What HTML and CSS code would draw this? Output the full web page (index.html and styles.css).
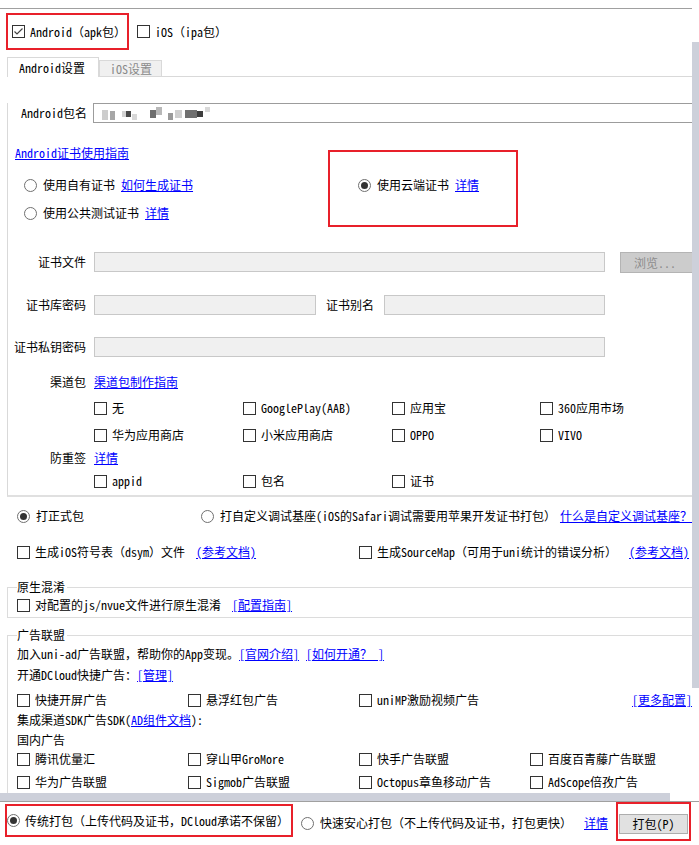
FILE: index.html
```html
<!DOCTYPE html>
<html lang="zh-CN">
<head>
  <meta charset="UTF-8">
  <meta name="viewport" content="width=device-width, initial-scale=1.0">
  <title>云打包</title>
  <link rel="stylesheet" href="styles.css">
</head>
<body>
  <div class="window">
    <div class="viewport">
      <div class="platforms">
        <div class="plat-main">
          <span class="cb"><svg width="11" height="11" viewBox="0 0 11 11"><path d="M1.5 5.5 L4 8 L9.5 2.5" fill="none" stroke="#444" stroke-width="1.2"/></svg></span>Android（apk包）
        </div>
        <div class="plat"><span class="cb"></span>iOS（ipa包）</div>
      </div>

      <div class="tabs">
        <div class="tab-active">Android设置</div>
        <div class="tab">iOS设置</div>
        <div class="tab-fill"></div>
      </div>

      <div class="panel">
        <div class="pkg-row">
          <span class="pkg-label">Android包名</span>
          <div class="pkg-input"><div class="mosaic"></div></div>
        </div>

        <div class="cert-row">
          <div class="cert-left">
            <a href="#" class="guide-link">Android证书使用指南</a>
            <div class="radio-line first"><span class="rd"></span>使用自有证书&nbsp;<a href="#">如何生成证书</a></div>
            <div class="radio-line second"><span class="rd"></span>使用公共测试证书&nbsp;<a href="#">详情</a></div>
          </div>
          <div class="cloud-box">
            <div class="radio-line"><span class="rd on"></span>使用云端证书&nbsp;<a href="#">详情</a></div>
          </div>
        </div>

        <div class="fields">
          <div class="field-row row1">
            <span class="field-label">证书文件</span>
            <div class="input-gray w511"></div>
            <div class="browse-btn">浏览...</div>
          </div>
          <div class="field-row row2">
            <span class="field-label">证书库密码</span>
            <div class="input-gray w222"></div>
            <span class="alias-label">证书别名</span>
            <div class="input-gray w221"></div>
          </div>
          <div class="field-row row3">
            <span class="field-label">证书私钥密码</span>
            <div class="input-gray w511"></div>
          </div>

          <div class="opt-row channel">
            <span class="field-label">渠道包</span>
            <a href="#" class="opt-link">渠道包制作指南</a>
          </div>
          <div class="cb-grid">
            <div class="cb-item"><span class="cb"></span>无</div>
            <div class="cb-item"><span class="cb"></span>GooglePlay(AAB)</div>
            <div class="cb-item"><span class="cb"></span>应用宝</div>
            <div class="cb-item"><span class="cb"></span>360应用市场</div>
            <div class="cb-item"><span class="cb"></span>华为应用商店</div>
            <div class="cb-item"><span class="cb"></span>小米应用商店</div>
            <div class="cb-item"><span class="cb"></span>OPPO</div>
            <div class="cb-item"><span class="cb"></span>VIVO</div>
          </div>
          <div class="opt-row resign">
            <span class="field-label">防重签</span>
            <a href="#" class="opt-link">详情</a>
          </div>
          <div class="cb-grid small">
            <div class="cb-item"><span class="cb"></span>appid</div>
            <div class="cb-item"><span class="cb"></span>包名</div>
            <div class="cb-item"><span class="cb"></span>证书</div>
          </div>
        </div>
      </div>

      <div class="mode-row">
        <div class="mode-item"><span class="rd on"></span>打正式包</div>
        <div class="mode-item2"><span class="rd"></span>打自定义调试基座(iOS的Safari调试需要用苹果开发证书打包）<a href="#" class="mode-link">什么是自定义调试基座？</a></div>
      </div>

      <div class="sym-row">
        <div class="sym-item"><span class="cb"></span>生成iOS符号表（dsym）文件<a href="#" class="ref-link">(参考文档)</a></div>
        <div class="sym-item2"><span class="cb"></span>生成SourceMap（可用于uni统计的错误分析）<a href="#" class="ref-link2">(参考文档)</a></div>
      </div>

      <fieldset class="group obf">
        <legend>原生混淆</legend>
        <div class="obf-row"><span class="cb"></span>对配置的js/nvue文件进行原生混淆<a href="#" class="ref-link">[配置指南]</a></div>
      </fieldset>

      <fieldset class="group ads">
        <legend>广告联盟</legend>
        <div class="ad-line l1">加入uni-ad广告联盟，帮助你的App变现。<a href="#">[官网介绍]</a><a href="#" class="gap-link">[如何开通？ ]</a></div>
        <div class="ad-line l2">开通DCloud快捷广告：<a href="#">[管理]</a></div>
        <div class="ad-grid first">
          <div class="cb-item"><span class="cb"></span>快捷开屏广告</div>
          <div class="cb-item"><span class="cb"></span>悬浮红包广告</div>
          <div class="cb-item"><span class="cb"></span>uniMP激励视频广告</div>
          <a href="#" class="more-link">[更多配置]</a>
        </div>
        <div class="ad-line l3">集成渠道SDK广告SDK(<a href="#">AD组件文档</a>):</div>
        <div class="ad-line l4">国内广告</div>
        <div class="ad-grid r1">
          <div class="cb-item"><span class="cb"></span>腾讯优量汇</div>
          <div class="cb-item"><span class="cb"></span>穿山甲GroMore</div>
          <div class="cb-item"><span class="cb"></span>快手广告联盟</div>
          <div class="cb-item"><span class="cb"></span>百度百青藤广告联盟</div>
        </div>
        <div class="ad-grid r2">
          <div class="cb-item"><span class="cb"></span>华为广告联盟</div>
          <div class="cb-item"><span class="cb"></span>Sigmob广告联盟</div>
          <div class="cb-item"><span class="cb"></span>Octopus章鱼移动广告</div>
          <div class="cb-item"><span class="cb"></span>AdScope倍孜广告</div>
        </div>
      </fieldset>
    </div>
    <div class="vtrack"><div class="vthumb"></div></div>
  </div>
  <div class="hbar"><div class="hthumb"></div></div>

  <div class="footer">
    <div class="pack-box"><span class="rd on"></span>传统打包（上传代码及证书，DCloud承诺不保留）</div>
    <div class="fast-item"><span class="rd"></span>快速安心打包（不上传代码及证书，打包更快）<a href="#" class="fast-link">详情</a></div>
    <div class="btn-box"><div class="pack-btn">打包(P)</div></div>
  </div>
</body>
</html>
```

FILE: styles.css
```css
body {
  margin: 0;
  font-family: "Noto Sans Mono CJK SC", "Noto Sans CJK SC", sans-serif;
  font-size: 12px;
  line-height: 16px;
  color: #000;
  background: #fff;
}
a {
  color: #0000ff;
  text-decoration: underline;
}
.window {
  display: flex;
  padding-top: 8px;
}
.viewport {
  width: 692px;
  height: 784px;
  border-top: 1px solid #a0a0a0;
  overflow: hidden;
  white-space: nowrap;
}
.vtrack {
  width: 7px;
  padding-top: 34px;
}
.vthumb {
  height: 646px;
  background: #cdd0da;
}
.hbar {
  height: 8px;
}
.hthumb {
  width: 670px;
  height: 8px;
  background: #cdd0da;
}

/* controls */
.cb {
  box-sizing: border-box;
  width: 13px;
  height: 13px;
  border: 1px solid #333;
  background: #fff;
  margin-right: 5px;
  flex: none;
  display: inline-flex;
  align-items: center;
  justify-content: center;
}
.rd {
  box-sizing: border-box;
  width: 13px;
  height: 13px;
  border: 1px solid #707070;
  border-radius: 50%;
  background: #fff;
  margin-right: 6px;
  flex: none;
  display: inline-flex;
  align-items: center;
  justify-content: center;
}
.rd.on::after {
  content: "";
  width: 7px;
  height: 7px;
  border-radius: 50%;
  background: #333;
}

/* platforms */
.platforms {
  display: flex;
  align-items: center;
  margin-top: 4px;
  height: 37px;
}
.plat-main {
  box-sizing: border-box;
  width: 123px;
  height: 37px;
  margin-left: 6px;
  border: 2px solid #e8202a;
  padding-left: 4px;
  display: flex;
  align-items: center;
}
.plat {
  margin-left: 8px;
  display: flex;
  align-items: center;
}

/* tabs */
.tabs {
  display: flex;
  align-items: flex-end;
  margin-top: 7px;
  margin-left: 7px;
  height: 20px;
}
.tab-active {
  box-sizing: border-box;
  width: 92px;
  height: 20px;
  border: 1px solid #d9d9d9;
  border-bottom: none;
  padding-left: 11px;
  line-height: 19px;
  background: #fff;
}
.tab {
  box-sizing: border-box;
  width: 63px;
  height: 17px;
  border: 1px solid #d9d9d9;
  background: #f0f0f0;
  color: #8a8a8a;
  padding-left: 10px;
  line-height: 15px;
}
.tab-fill {
  flex: 1;
  border-bottom: 1px solid #d9d9d9;
}

/* panel */
.panel {
  margin-left: 7px;
  border-left: 1px solid #d9d9d9;
  border-bottom: 2px solid #e0e0e0;
  padding: 0 0 6px 7px;
}
.pkg-row {
  display: flex;
  align-items: center;
  height: 20px;
  margin-top: 26px;
}
.pkg-label {
  margin-left: 6px;
  width: 66px;
}
.pkg-input {
  box-sizing: border-box;
  flex: none;
  width: 640px;
  height: 20px;
  margin-left: 6px;
  border: 1px solid #9c9c9c;
  background: #fff;
}
.mosaic {
  width: 112px;
  height: 14px;
  margin: 2px 0 0 6px;
  background:
    linear-gradient(#cdcdcd, #cdcdcd) 2px 4px / 6px 10px no-repeat,
    linear-gradient(#a6a6a6, #a6a6a6) 10px 5px / 5px 9px no-repeat,
    linear-gradient(#d2d2d2, #d2d2d2) 22px 5px / 4px 6px no-repeat,
    linear-gradient(#4a4a4a, #4a4a4a) 26px 5px / 5px 6px no-repeat,
    linear-gradient(#d8d8d8, #d8d8d8) 32px 8px / 5px 6px no-repeat,
    linear-gradient(#6e6e6e, #6e6e6e) 50px 4px / 6px 8px no-repeat,
    linear-gradient(#b8b8b8, #b8b8b8) 56px 1px / 6px 8px no-repeat,
    linear-gradient(#9a9a9a, #9a9a9a) 68px 7px / 5px 7px no-repeat,
    linear-gradient(#cfcfcf, #cfcfcf) 75px 4px / 7px 8px no-repeat,
    linear-gradient(#707070, #707070) 85px 4px / 12px 8px no-repeat,
    linear-gradient(#3e3e3e, #3e3e3e) 97px 5px / 6px 6px no-repeat,
    linear-gradient(#d9d9d9, #d9d9d9) 105px 1px / 5px 5px no-repeat;
}

/* certificate */
.cert-row {
  display: flex;
  align-items: flex-start;
  margin-top: 22px;
}
.cert-left {
  width: 313px;
}
.guide-link {
  display: block;
  width: max-content;
}
.radio-line {
  display: flex;
  align-items: center;
  height: 16px;
}
.cert-left .radio-line {
  margin-left: 9px;
}
.radio-line.first {
  margin-top: 16px;
}
.radio-line.second {
  margin-top: 12px;
}
.cloud-box {
  box-sizing: border-box;
  width: 190px;
  height: 77px;
  margin-top: 5px;
  border: 2px solid #e8202a;
  padding: 25px 0 0 28px;
}

/* fields */
.fields {
  margin-left: -7px;
}
.field-row {
  display: flex;
  align-items: center;
  height: 20px;
}
.field-row.row1 {
  margin-top: 25px;
}
.field-row.row2 {
  margin-top: 23px;
}
.field-row.row3 {
  margin-top: 22px;
}
.field-label {
  width: 78px;
  flex: none;
  text-align: right;
  margin-right: 8px;
}
.input-gray {
  box-sizing: border-box;
  flex: none;
  height: 20px;
  border: 1px solid #c8c8c8;
  background: #f0f0f0;
}
.w511 { width: 511px; }
.w222 { width: 222px; }
.w221 { width: 221px; }
.alias-label {
  margin: 0 10px;
}
.browse-btn {
  box-sizing: border-box;
  flex: none;
  align-self: flex-start;
  width: 80px;
  height: 21px;
  margin-left: 15px;
  border: 1px solid #b4b4b4;
  background: #cccccc;
  color: #8c8c8c;
  padding-left: 13px;
  line-height: 19px;
}
.opt-row {
  display: flex;
  height: 16px;
}
.opt-row.channel {
  margin-top: 17px;
}
.opt-row.resign {
  margin-top: 7px;
}
.cb-grid {
  display: grid;
  grid-template-columns: 149px 149px 148px 150px;
  row-gap: 11px;
  margin: 10px 0 0 86px;
}
.cb-grid.small {
  margin-top: 7px;
}
.cb-item {
  display: flex;
  align-items: center;
  height: 16px;
}

/* build mode */
.mode-row {
  display: flex;
  height: 16px;
  margin-top: 11px;
  padding-left: 17px;
}
.mode-item {
  display: flex;
  align-items: center;
  width: 186px;
}
.mode-item2 {
  display: flex;
  align-items: center;
}
.mode-link {
  margin-left: 4px;
}
.sym-row {
  display: flex;
  height: 16px;
  margin-top: 20px;
  padding-left: 17px;
}
.sym-item {
  display: flex;
  align-items: center;
  width: 342px;
}
.sym-item2 {
  display: flex;
  align-items: center;
}
.ref-link {
  margin-left: 11px;
}
.ref-link2 {
  margin-left: 12px;
}

/* group boxes */
.group {
  margin: 0 0 0 7px;
  min-width: 0;
  border: 1px solid #dcdcdc;
  border-right: none;
  padding: 0 0 4px 9px;
}
.group legend {
  padding: 0 2px 0 0;
  line-height: 16px;
}
.group.obf {
  margin-top: 19px;
}
.group.ads {
  margin-top: 9px;
}
.obf-row {
  display: flex;
  align-items: center;
  height: 16px;
  margin-top: 2px;
}
.ad-line {
  height: 16px;
}
.ad-line.l1 { margin-top: 3px; }
.ad-line.l2 { margin-top: 5px; }
.ad-line.l3 { margin-top: 4px; }
.ad-line.l4 { margin-top: 4px; }
.gap-link {
  margin-left: 7px;
}
.ad-grid {
  display: grid;
  grid-template-columns: 171px 171px 171px 171px;
}
.ad-grid.first {
  grid-template-columns: 171px 171px 273px auto;
  margin-top: 9px;
}
.ad-grid.r1 { margin-top: 3px; }
.ad-grid.r2 { margin-top: 7px; }
.more-link {
  line-height: 16px;
}

/* footer */
.footer {
  display: flex;
  align-items: flex-start;
  height: 43px;
  border-top: 1px solid #a0a0a0;
  white-space: nowrap;
}
.pack-box {
  box-sizing: border-box;
  width: 288px;
  height: 33px;
  margin: 2px 0 0 5px;
  border: 2px solid #e8202a;
  display: flex;
  align-items: center;
}
.pack-box .rd {
  margin-right: 5px;
}
.fast-item {
  display: flex;
  align-items: center;
  height: 16px;
  margin: 13px 0 0 8px;
}
.fast-link {
  margin-left: 12px;
}
.btn-box {
  box-sizing: border-box;
  width: 75px;
  height: 39px;
  margin-left: auto;
  margin-right: 8px;
  border: 2px solid #e8202a;
  padding: 10px 0 0 1px;
}
.pack-btn {
  box-sizing: border-box;
  width: 69px;
  height: 20px;
  border: 1px solid #adadad;
  background: #e1e1e1;
  text-align: center;
  line-height: 18px;
}
```
